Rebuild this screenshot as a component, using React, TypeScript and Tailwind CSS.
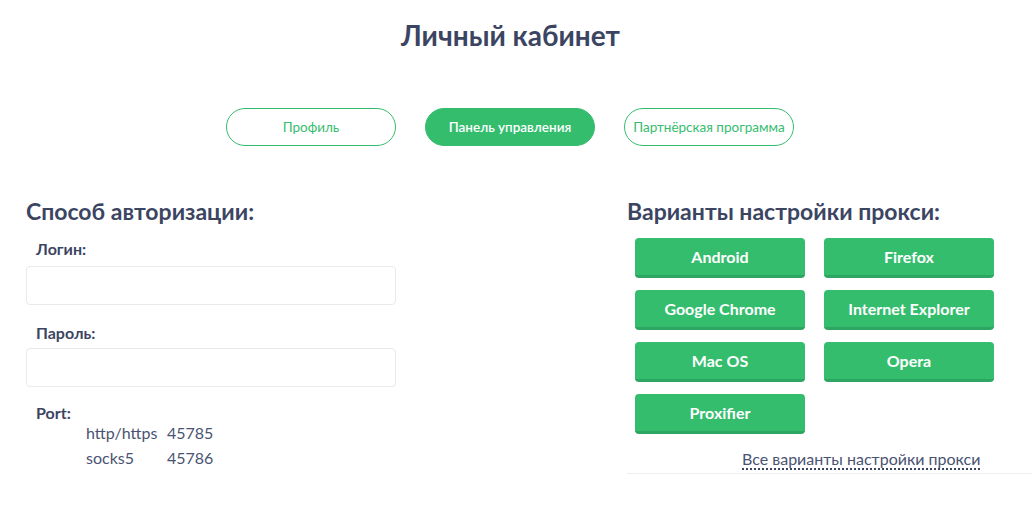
import React from 'react';

const tabs = [
  { label: 'Профиль', active: false },
  { label: 'Панель управления', active: true },
  { label: 'Партнёрская программа', active: false },
];

const setups = [
  'Android',
  'Firefox',
  'Google Chrome',
  'Internet Explorer',
  'Mac OS',
  'Opera',
  'Proxifier',
];

const ports = [
  { name: 'http/https', value: '45785' },
  { name: 'socks5', value: '45786' },
];

const App = () => {
  return (
    <div className="w-[1032px] h-[505px] bg-white text-[#3b4562] font-['Lato',sans-serif] overflow-hidden">
      <h1 className="pt-[17px] pr-[11px] text-center text-[28px] leading-[36px] font-bold">
        Личный кабинет
      </h1>

      <div className="mt-[55px] pr-[12px] flex justify-center gap-[29px]">
        {tabs.map((tab) => (
          <button
            key={tab.label}
            className={
              tab.active
                ? 'w-[170px] h-[38px] rounded-full bg-[#35bd6e] border border-[#35bd6e] text-white text-[13.5px] font-semibold'
                : 'w-[170px] h-[38px] rounded-full bg-white border border-[#35bd6e] text-[#35bd6e] text-[13.5px]'
            }
          >
            {tab.label}
          </button>
        ))}
      </div>

      <div className="mt-[50px] flex">
        <div className="w-[627px] pl-[26px]">
          <h2 className="text-[23px] leading-[30px] font-bold">Способ авторизации:</h2>

          <label className="block mt-[13px] pl-[10px] text-[16px] leading-[20px] font-bold">Логин:</label>
          <input className="block mt-[7px] w-[370px] h-[39px] border border-[#e8e9eb] rounded-[4px] outline-none" />

          <label className="block mt-[18px] pl-[10px] text-[16px] leading-[20px] font-bold">Пароль:</label>
          <input className="block mt-[5px] w-[370px] h-[39px] border border-[#e8e9eb] rounded-[4px] outline-none" />

          <div className="mt-[18px] pl-[10px] text-[16px] leading-[15px] font-bold">Port:</div>
          <div className="pl-[60px] text-[16px] leading-[25px] text-[#4a5372]">
            {ports.map((p) => (
              <div key={p.name} className="flex">
                <span className="w-[81px]">{p.name}</span>
                <span>{p.value}</span>
              </div>
            ))}
          </div>
        </div>

        <div className="flex-1">
          <h2 className="text-[23px] leading-[30px] font-bold">Варианты настройки прокси:</h2>

          <div className="mt-[12px] pl-[8px] grid grid-cols-[170px_170px] gap-x-[19px] gap-y-[12px]">
            {setups.map((s) => (
              <button
                key={s}
                className="h-[40px] rounded-[4px] bg-[#35bd6e] border-b-[3px] border-[#2ea562] text-white text-[16px] font-bold"
              >
                {s}
              </button>
            ))}
          </div>

          <div className="mt-[13px] pl-[115px] pb-[2px] border-b border-[#eceef0]">
            <a className="text-[16px] leading-[20px] text-[#4a5372] border-b-2 border-dotted border-[#3b4562]">
              Все варианты настройки прокси
            </a>
          </div>
        </div>
      </div>
    </div>
  );
};

export default App;
